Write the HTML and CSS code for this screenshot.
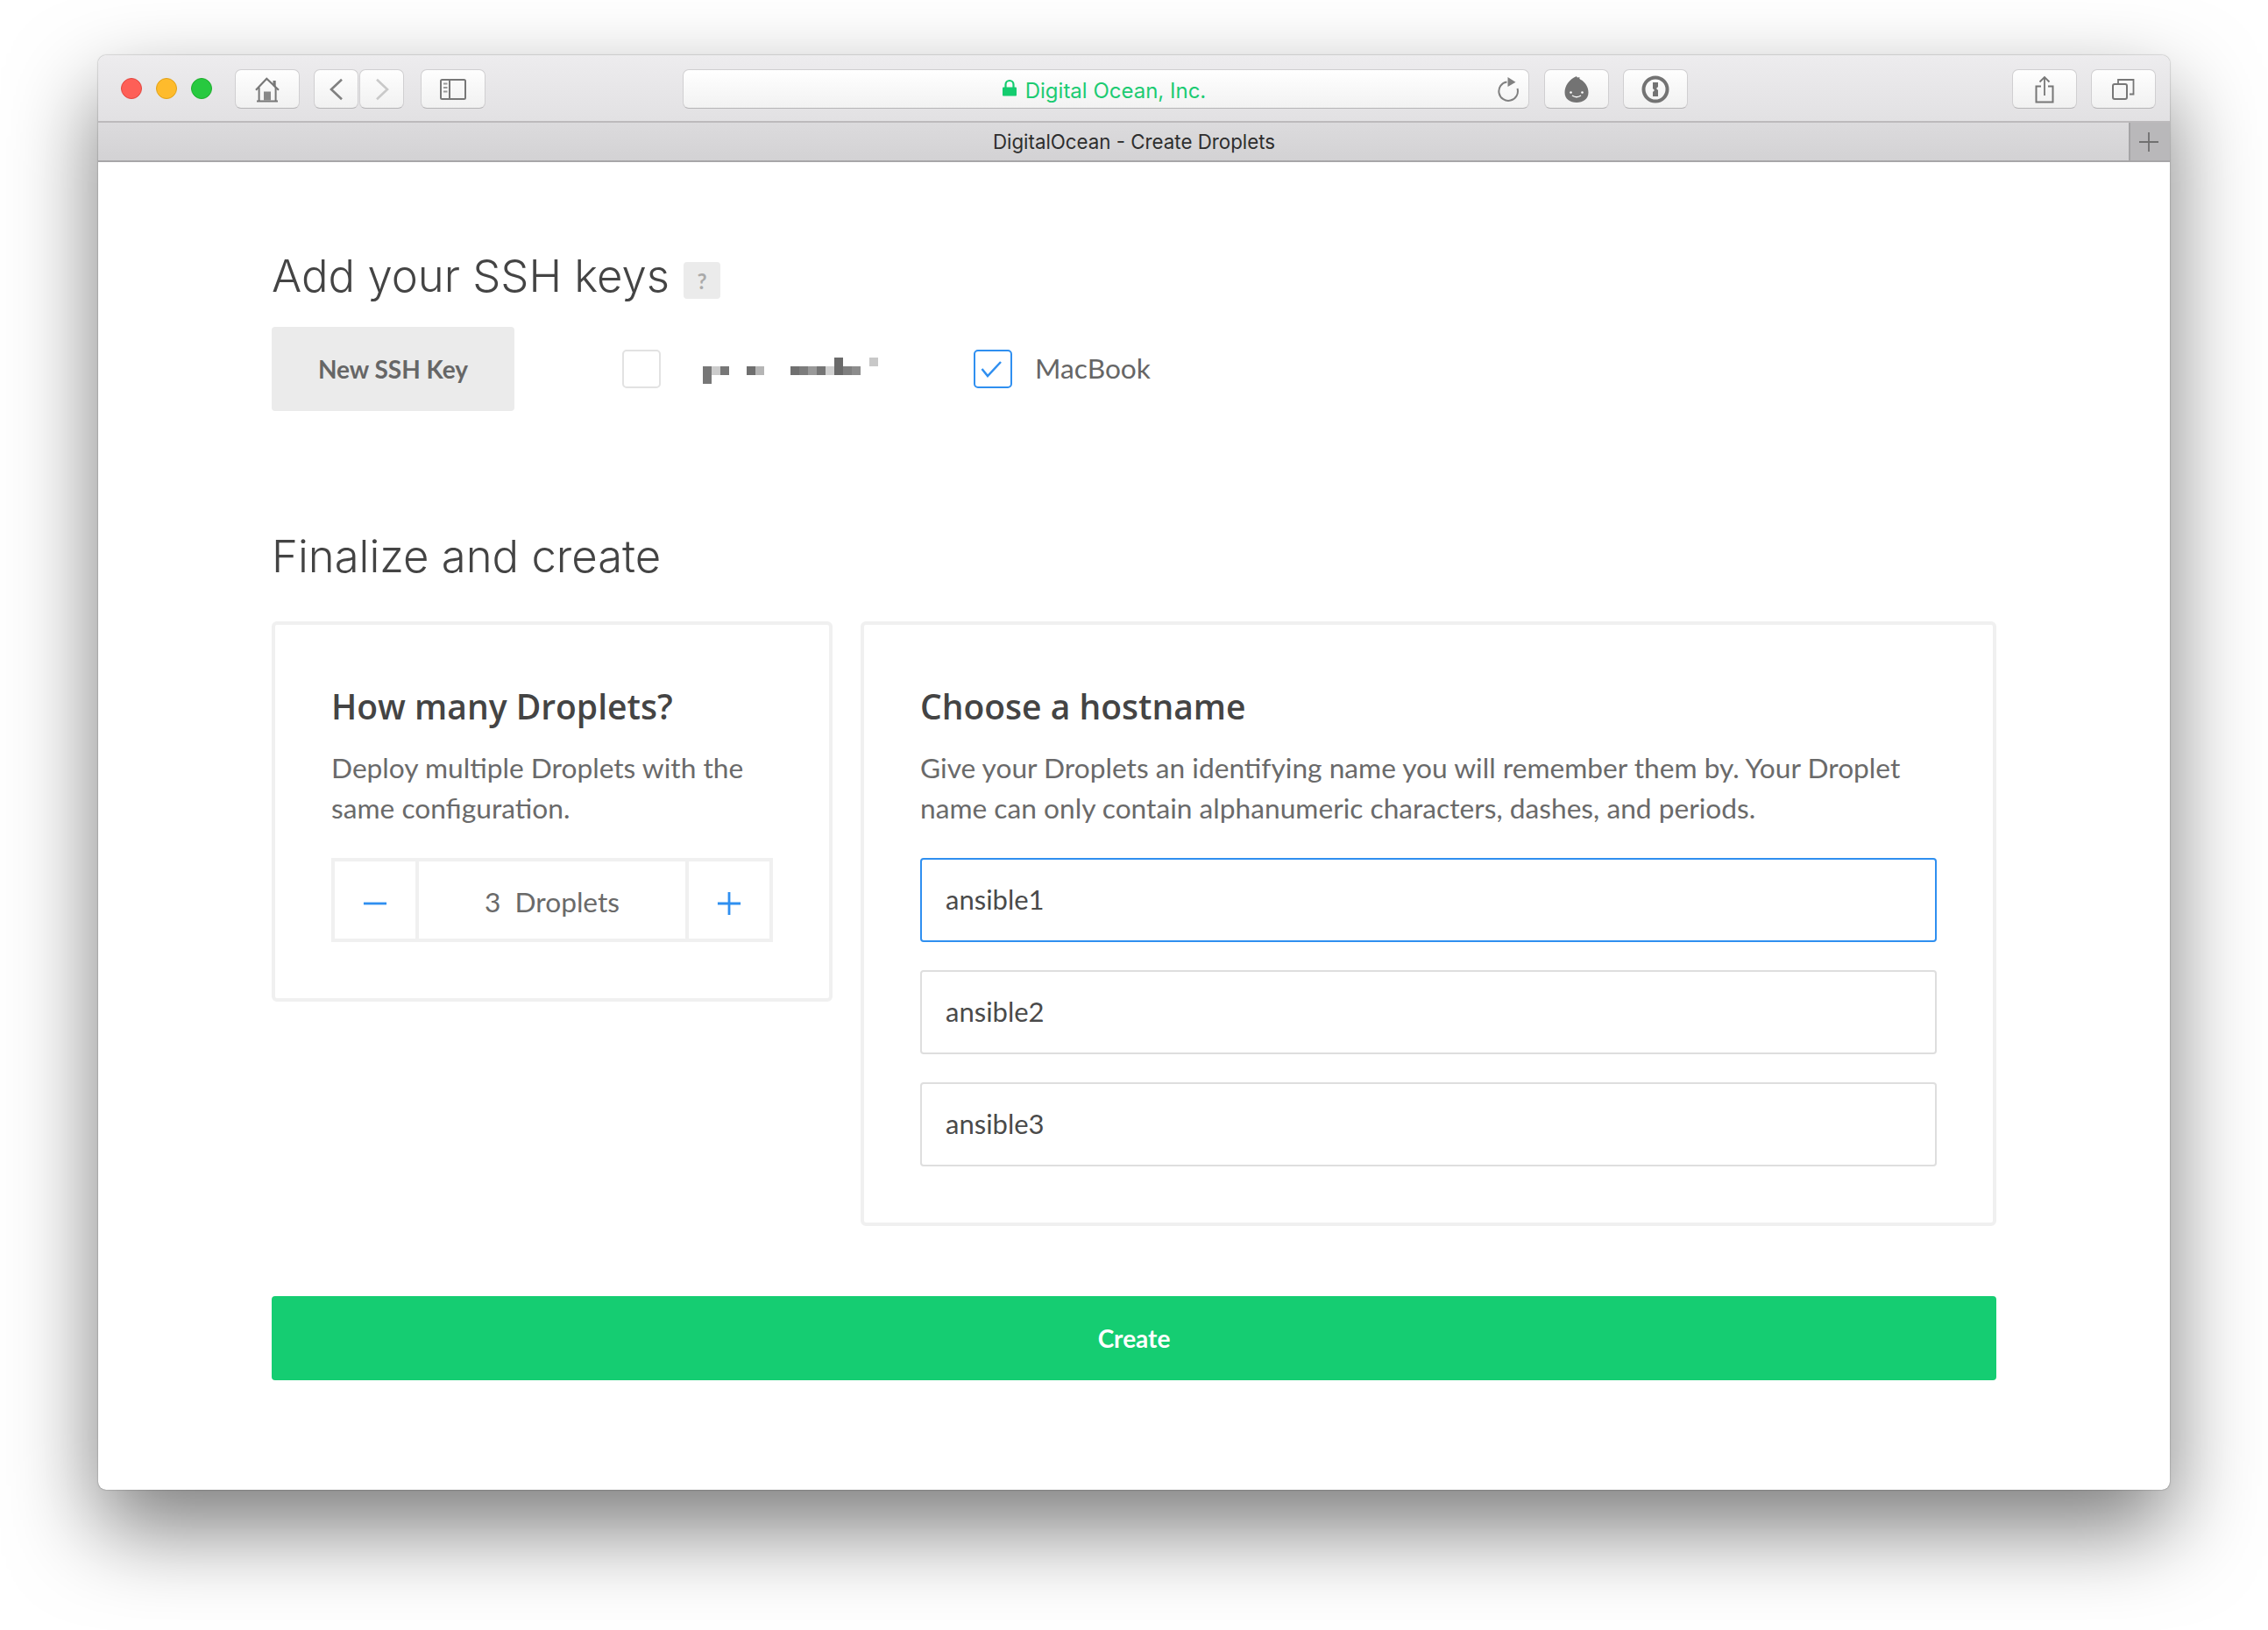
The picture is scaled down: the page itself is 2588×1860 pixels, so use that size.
FILE: index.html
```html
<!DOCTYPE html>
<html lang="en">
<head>
<meta charset="utf-8">
<title>DigitalOcean - Create Droplets</title>
<link rel="stylesheet" href="styles.css">
</head>
<body>
<div class="window">
  <header class="toolbar">
    <div class="lights">
      <span class="light light-red"></span>
      <span class="light light-yellow"></span>
      <span class="light light-green"></span>
    </div>
    <button class="tb tb-wide tb-home" type="button" aria-label="Home">
      <svg class="ico" width="30" height="30" viewBox="0 0 30 30"><path d="M21.5 11V5h3.2v9" fill="#777"/><path d="M2 15.8 14.3 2.8 28 15.8" fill="none" stroke="#777" stroke-width="2.2"/><path d="M5.6 13v15M24.6 13v15" fill="none" stroke="#777" stroke-width="2"/><path d="M3 27.5h24v2H3z" fill="#777"/><path d="M11 17.5h8v10h-8z" fill="#888"/></svg>
    </button>
    <div class="nav-pair">
      <button class="tb tb-back" type="button" aria-label="Back">
        <svg class="ico" width="16" height="26" viewBox="0 0 16 26"><path d="M14 1.7 2 13l12 11.3" fill="none" stroke="#808080" stroke-width="2.6"/></svg>
      </button>
      <button class="tb tb-forward" type="button" aria-label="Forward">
        <svg class="ico" width="16" height="26" viewBox="0 0 16 26"><path d="M2 1.7 14 13 2 24.3" fill="none" stroke="#c9c9c9" stroke-width="2.6"/></svg>
      </button>
    </div>
    <button class="tb tb-wide tb-sidebar" type="button" aria-label="Sidebar">
      <svg class="ico" width="30" height="24" viewBox="0 0 30 24"><rect x="1" y="1" width="28" height="22" rx="1.5" fill="none" stroke="#777" stroke-width="2"/><path d="M11 1v22" stroke="#777" stroke-width="2"/><path d="M4 4.5h4.5v2H4zM4 9h4.5v2H4zM4 13.5h4.5v2H4z" fill="#999"/></svg>
    </button>
    <div class="address">
      <svg class="lock" width="16" height="20" viewBox="0 0 16 20"><path d="M3.5 10V6.500a4.500 4.500 0 0 1 9 0V10" fill="none" stroke="#14cc6f" stroke-width="2.2"/><rect x="0" y="9.500" width="16" height="10" rx="1" fill="#14cc6f"/></svg>
      <span class="address-text">Digital Ocean, Inc.</span>
      <svg class="reload" width="26" height="30" viewBox="0 0 26 30"><path d="M11.5 7.400A10.800 10.800 0 1 0 23.500 15" fill="none" stroke="#808080" stroke-width="2"/><path d="M12.500 2l9 5.700-9 5.300z" fill="#808080"/></svg>
    </div>
    <button class="tb tb-wide tb-ghost" type="button" aria-label="Ghostery">
      <svg class="ico" width="30" height="32" viewBox="0 0 30 32"><path d="M15 1c.5 2 2 1.500 3.500 1-.5 1.500 0 2.500 1.500 3 4.500 2.500 8.500 8 8.500 14.500C28.500 27 22.500 31 15 31S1.500 27 1.500 19.500C1.500 12 6.500 4.500 15 1z" fill="#737373"/><circle cx="8.500" cy="19.500" r="1.300" fill="#fff"/><circle cx="21.500" cy="19.500" r="1.300" fill="#fff"/><path d="M10 23c3 2 7 2 10 0" fill="none" stroke="#fff" stroke-width="1.400"/></svg>
    </button>
    <button class="tb tb-wide tb-pass" type="button" aria-label="1Password">
      <svg class="ico" width="34" height="34" viewBox="0 0 34 34"><circle cx="17" cy="17" r="13.500" fill="none" stroke="#737373" stroke-width="4"/><path d="M14 9h6v5l-2 2 2 2v7h-6v-5l2-2-2-2z" fill="#737373"/></svg>
    </button>
    <div class="toolbar-end">
      <button class="tb tb-wide tb-share" type="button" aria-label="Share">
        <svg class="ico" width="24" height="32" viewBox="0 0 24 32"><path d="M8 12.500H2.500v18h19v-18H16" fill="none" stroke="#777" stroke-width="2"/><path d="M12 23V2M6.500 7.500 12 2l5.500 5.500" fill="none" stroke="#777" stroke-width="1.800"/></svg>
      </button>
      <button class="tb tb-wide tb-tabs" type="button" aria-label="Tabs">
        <svg class="ico" width="26" height="26" viewBox="0 0 26 26"><rect x="1" y="7" width="16" height="17" rx="2" fill="none" stroke="#777" stroke-width="2"/><path d="M7 6V2h17.500v16.500H20" fill="none" stroke="#777" stroke-width="1.800"/></svg>
      </button>
    </div>
  </header>
  <div class="tabbar">
    <span class="tab-title">DigitalOcean - Create Droplets</span>
    <button class="tab-new" type="button" aria-label="New tab">
      <svg width="24" height="24" viewBox="0 0 24 24"><path d="M1 12h22M12 1v22" stroke="#707070" stroke-width="1.800"/></svg>
    </button>
  </div>
  <main class="content">
    <div class="title-row">
      <h2 class="section-title">Add your SSH keys</h2>
      <span class="help">?</span>
    </div>
    <div class="ssh-row">
      <button class="btn-new" type="button">New SSH Key</button>
      <span class="check"></span>
      <svg class="redacted" width="200" height="30" viewBox="0 0 200 30" aria-hidden="true">
        <rect x="0" y="10" width="10" height="20" fill="#777"/><rect x="10" y="10" width="10" height="10" fill="#ccc"/><rect x="20" y="10" width="10" height="10" fill="#777"/>
        <rect x="50" y="10" width="10" height="10" fill="#6f6f6f"/><rect x="60" y="10" width="10" height="10" fill="#b5b5b5"/>
        <rect x="100" y="10" width="10" height="10" fill="#707070"/><rect x="110" y="10" width="10" height="10" fill="#7c7c7c"/><rect x="120" y="10" width="10" height="10" fill="#999"/><rect x="130" y="10" width="10" height="10" fill="#757575"/><rect x="140" y="10" width="10" height="10" fill="#d0d0d0"/><rect x="150" y="0" width="10" height="20" fill="#6a6a6a"/><rect x="160" y="10" width="10" height="10" fill="#7f7f7f"/><rect x="170" y="10" width="10" height="10" fill="#8c8c8c"/>
        <rect x="190" y="0" width="10" height="10" fill="#c8c8c8"/>
      </svg>
      <span class="check check-on">
        <svg width="40" height="40" viewBox="0 0 40 40"><path d="M7.500 20 14 28 29 12" fill="none" stroke="#2f8ff0" stroke-width="2.500"/></svg>
      </span>
      <span class="check-label">MacBook</span>
    </div>
    <h2 class="section-title section-finalize">Finalize and create</h2>
    <div class="cards">
      <section class="card">
        <h3 class="card-title">How many Droplets?</h3>
        <p class="card-text">Deploy multiple Droplets with the same configuration.</p>
        <div class="stepper">
          <span class="step">
            <svg width="30" height="30" viewBox="0 0 30 30"><path d="M1 15h28" stroke="#2f8ff0" stroke-width="3"/></svg>
          </span>
          <span class="step-value">3&nbsp; Droplets</span>
          <span class="step">
            <svg width="30" height="30" viewBox="0 0 30 30"><path d="M1 15h28M15 1v28" stroke="#2f8ff0" stroke-width="3"/></svg>
          </span>
        </div>
      </section>
      <section class="card">
        <h3 class="card-title">Choose a hostname</h3>
        <p class="card-text">Give your Droplets an identifying name you will remember them by. Your Droplet name can only contain alphanumeric characters, dashes, and periods.</p>
        <div class="host-list">
          <input class="host host-focus" type="text" value="ansible1">
          <input class="host" type="text" value="ansible2">
          <input class="host" type="text" value="ansible3">
        </div>
      </section>
    </div>
    <button class="btn-create" type="button">Create</button>
  </main>
</div>
</body>
</html>
```
FILE: styles.css
```css
* { box-sizing: border-box; }
html, body { margin: 0; background: #fff; }
body {
  width: 2588px;
  height: 1860px;
  padding: 63px 112px 0;
  overflow: hidden;
  font-family: "Lato", "Liberation Sans", sans-serif;
}
button { font-family: inherit; padding: 0; margin: 0; }
.window {
  width: 2364px;
  height: 1637px;
  background: #fff;
  border-radius: 9px;
  box-shadow: 0 0 1.5px rgba(0,0,0,.55), 0 44px 100px rgba(0,0,0,.52);
}
.toolbar {
  height: 77px;
  display: flex;
  align-items: flex-start;
  padding: 16px 16px 0 26px;
  background: linear-gradient(#edecee, #e2e1e3);
  border-bottom: 2px solid #bcbabc;
  border-radius: 9px 9px 0 0;
}
.lights { display: flex; gap: 16px; margin-top: 10px; margin-right: 26px; }
.light { width: 24px; height: 24px; border-radius: 50%; border: 1px solid; }
.light-red { background: #fe5f57; border-color: #e2463f; }
.light-yellow { background: #febb2c; border-color: #e1a116; }
.light-green { background: #27c93f; border-color: #1dad2b; }
.tb {
  height: 45px;
  display: flex;
  align-items: center;
  justify-content: center;
  background: linear-gradient(#fefefe, #f1f1f1);
  border: 1px solid #d0cfd1;
  border-bottom-color: #b5b4b6;
  border-radius: 7px;
}
.tb-wide { width: 74px; }
.nav-pair { display: flex; gap: 1px; margin: 0 19px 0 16px; }
.tb-back, .tb-forward { width: 51px; }
.address {
  position: relative;
  width: 966px;
  height: 45px;
  margin: 0 17px 0 225px;
  display: flex;
  align-items: center;
  justify-content: center;
  gap: 10px;
  padding-right: 4px;
  background: linear-gradient(#ffffff, #f2f2f2);
  border: 1px solid #d0cfd1;
  border-bottom-color: #b5b4b6;
  border-radius: 7px;
}
.lock { margin-top: -3px; }
.address-text { font-family: "Inter", sans-serif; font-size: 24px; color: #1ccb72; line-height: 45px; margin-top: 3px; }
.reload { position: absolute; right: 10px; top: 6px; }
.tb-ghost { margin-right: 16px; }
.toolbar-end { display: flex; gap: 16px; margin-left: auto; }
.tabbar {
  position: relative;
  height: 45px;
  display: flex;
  align-items: center;
  justify-content: center;
  background: linear-gradient(#dcdbdd, #d3d2d4);
  border-bottom: 2px solid #a7a6a8;
}
.tab-title { font-family: "Inter", sans-serif; font-size: 22.3px; color: #2e2e2e; line-height: 43px; }
.tab-new {
  position: absolute;
  right: 0;
  top: 0;
  width: 47px;
  height: 43px;
  display: flex;
  align-items: center;
  justify-content: center;
  padding-right: 4px;
  background: #b9b8ba;
  border: 0;
  border-left: 2px solid #a5a4a6;
}
.content { padding: 100px 198px 0; }
.title-row { display: flex; align-items: center; gap: 16px; height: 60px; }
.section-title { margin: 0; font-family: "Inter", sans-serif; font-size: 50.8px; font-weight: 300; line-height: 60px; color: #444; }
.help {
  width: 42px;
  height: 42px;
  margin-top: 10px;
  display: flex;
  align-items: center;
  justify-content: center;
  background: #ebebeb;
  border-radius: 4px;
  color: #aaa;
  font-size: 24px;
  font-weight: 700;
}
.ssh-row { display: flex; align-items: center; margin-top: 28px; height: 96px; }
.btn-new {
  width: 277px;
  height: 96px;
  margin-right: 123px;
  background: #ebebeb;
  border: 0;
  border-radius: 4px;
  color: #666;
  font-size: 28px;
  font-weight: 700;
}
.check {
  width: 44px;
  height: 44px;
  border: 2px solid #e2e2e2;
  border-radius: 5px;
  background: #fff;
  flex: none;
}
.check-on { border-color: #2f8ff0; }
.check-on svg { display: block; }
.redacted { margin: 4px 109px 0 48px; flex: none; }
.check-label { margin: -3px 0 0 26px; font-size: 31.7px; color: #666; }
.section-finalize { margin-top: 136px; }
.cards { display: grid; grid-template-columns: 640px 1fr; gap: 32px; align-items: start; margin-top: 44px; }
.card { padding: 64px; border: 4px solid #f0f0f0; border-radius: 6px; }
.card-title { margin: 0; font-family: "Open Sans", sans-serif; font-size: 39px; font-weight: 600; line-height: 58px; color: #444; }
.card-text { margin: 18px 0 34px; font-size: 31.7px; line-height: 46px; color: #6a6a6a; }
.stepper { display: flex; height: 96px; border: 4px solid #f0f0f0; }
.step { width: 92px; display: flex; align-items: center; justify-content: center; }
.step svg { margin-top: 8px; width: 28px; height: 28px; }
.step-value {
  flex: 1;
  display: flex;
  align-items: center;
  justify-content: center;
  padding-top: 3px;
  border-left: 4px solid #f0f0f0;
  border-right: 4px solid #f0f0f0;
  font-size: 31.7px;
  color: #6a6a6a;
}
.host-list { display: flex; flex-direction: column; gap: 32px; }
.host {
  width: 100%;
  height: 96px;
  padding: 0 27px 3px;
  border: 2px solid #dedede;
  border-radius: 4px;
  outline: 0;
  background: #fff;
  font-family: inherit;
  font-size: 31px;
  color: #4a4a4a;
}
.host-focus { border-color: #2f8ff0; }
.btn-create {
  display: block;
  width: 100%;
  height: 96px;
  margin-top: 80px;
  background: #15cd72;
  border: 0;
  border-radius: 4px;
  color: #fff;
  font-size: 28px;
  font-weight: 700;
}
```
